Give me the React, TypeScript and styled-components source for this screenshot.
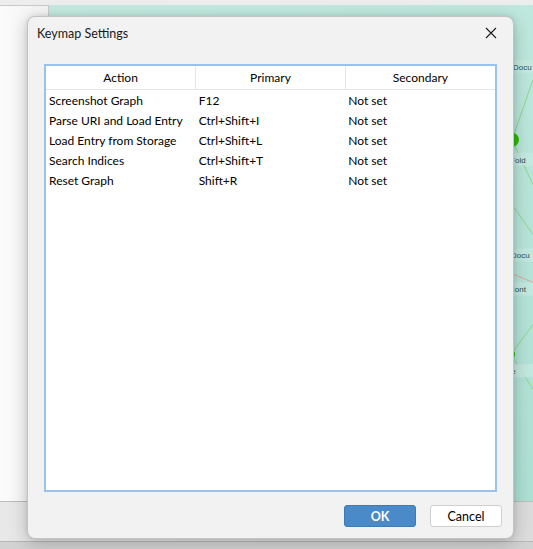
import React from "react";
import styled, { createGlobalStyle } from "styled-components";

interface Binding {
  action: string;
  primary: string;
  secondary: string;
}

const bindings: Binding[] = [
  { action: "Screenshot Graph", primary: "F12", secondary: "Not set" },
  { action: "Parse URI and Load Entry", primary: "Ctrl+Shift+I", secondary: "Not set" },
  { action: "Load Entry from Storage", primary: "Ctrl+Shift+L", secondary: "Not set" },
  { action: "Search Indices", primary: "Ctrl+Shift+T", secondary: "Not set" },
  { action: "Reset Graph", primary: "Shift+R", secondary: "Not set" },
];

const GlobalStyle = createGlobalStyle`
  html, body {
    margin: 0;
    padding: 0;
    width: 533px;
    height: 549px;
    overflow: hidden;
    font-family: Lato, "Noto Sans", sans-serif;
  }
`;

const App = () => {
  return (
    <>
      <GlobalStyle />
      <Desktop>
        <TopStrip />
        <Workspace>
          <Sidebar />
          <Canvas>
            <GraphDrawing />
          </Canvas>
        </Workspace>
        <StatusBar />
        <BottomEdge />

        <Dialog>
          <TitleBar>
            <Title>Keymap Settings</Title>
            <CloseButton aria-label="Close">
              <svg width="12" height="12" viewBox="0 0 12 12">
                <path d="M1 1 L11 11 M11 1 L1 11" stroke="#1a1a1a" strokeWidth="1.1" />
              </svg>
            </CloseButton>
          </TitleBar>
          <Body>
            <TableFrame>
              <Table>
                <thead>
                  <tr>
                    <HeadCell>Action</HeadCell>
                    <HeadCell>Primary</HeadCell>
                    <HeadCell $last>Secondary</HeadCell>
                  </tr>
                </thead>
                <tbody>
                  {bindings.map((b) => (
                    <tr key={b.action}>
                      <Cell>{b.action}</Cell>
                      <Cell>{b.primary}</Cell>
                      <Cell>{b.secondary}</Cell>
                    </tr>
                  ))}
                </tbody>
              </Table>
            </TableFrame>
          </Body>
          <Footer>
            <Button $primary>OK</Button>
            <Button>Cancel</Button>
          </Footer>
        </Dialog>
      </Desktop>
    </>
  );
};

// graph canvas peeking out on the right of the dialog
const GraphDrawing = () => (
  <svg width="100%" height="100%" viewBox="0 0 484 497" preserveAspectRatio="xMaxYMin meet">
    <g stroke="#8fd68a" strokeWidth="1" fill="none">
      <line x1="484" y1="75" x2="463" y2="135" />
      <line x1="463" y1="135" x2="484" y2="180" />
      <line x1="463" y1="200" x2="484" y2="230" />
      <line x1="484" y1="245" x2="455" y2="260" />
      <line x1="484" y1="320" x2="462" y2="350" />
      <line x1="462" y1="350" x2="484" y2="385" />
    </g>
    <g stroke="#e3a3a0" strokeWidth="1" fill="none">
      <line x1="460" y1="268" x2="484" y2="278" />
    </g>
    <g fill="#c6ebe2" opacity="0.8">
      <rect x="462" y="55" width="30" height="13" rx="3" />
      <rect x="458" y="148" width="30" height="13" rx="3" />
      <rect x="460" y="244" width="30" height="13" rx="3" />
      <rect x="459" y="278" width="30" height="13" rx="3" />
      <rect x="460" y="360" width="30" height="13" rx="3" />
    </g>
    <circle cx="463" cy="135" r="7" fill="#2fb80a" />
    <circle cx="461" cy="350" r="5" fill="#2fb80a" />
    <g fill="#35504a" fontSize="8" fontFamily="Liberation Sans, sans-serif">
      <text x="464" y="65">Docu</text>
      <text x="459" y="158">tFold</text>
      <text x="462" y="254">Docu</text>
      <text x="460" y="288">Cont</text>
      <text x="460" y="370">te</text>
    </g>
  </svg>
);

const Desktop = styled.div`
  position: relative;
  width: 533px;
  height: 549px;
  display: flex;
  flex-direction: column;
  background: #ececec;
`;

const TopStrip = styled.div`
  height: 5px;
  background: #ededed;
`;

const Workspace = styled.div`
  height: 496px;
  display: flex;
`;

const Sidebar = styled.div`
  width: 48px;
  background: linear-gradient(to right, #fbfbfb, #f3f3f3);
  border-top: 1px solid #c9c9c9;
  border-right: 1px solid #c9c9c9;
`;

const Canvas = styled.div`
  flex: 1;
  background: linear-gradient(160deg, #c4ebe1, #aee0d3);
  overflow: hidden;
`;

const StatusBar = styled.div`
  height: 39px;
  background: linear-gradient(to right, #e8e8e8, #dcdcdc);
  border-top: 1px solid #bdbdbd;
`;

const BottomEdge = styled.div`
  flex: 1;
  background: #d2d2d2;
  border-top: 1px solid #b8b8b8;
`;

const Dialog = styled.div`
  position: absolute;
  left: 27px;
  top: 16px;
  width: 487px;
  height: 523px;
  display: flex;
  flex-direction: column;
  background: #f2f2f2;
  border: 1px solid #c3c3c3;
  border-radius: 8px;
  box-shadow: 0 4px 18px rgba(0, 0, 0, 0.22), 0 0 4px rgba(0, 0, 0, 0.1);
  box-sizing: border-box;
`;

const TitleBar = styled.div`
  height: 32px;
  display: flex;
  align-items: center;
  justify-content: space-between;
  padding: 0 14px 0 9px;
`;

const Title = styled.div`
  font-size: 12.5px;
  color: #1a1a1a;
`;

const CloseButton = styled.div`
  width: 16px;
  height: 16px;
  display: flex;
  align-items: center;
  justify-content: center;
`;

const Body = styled.div`
  flex: 1;
  display: flex;
  padding: 15px 16px 0 16px;
`;

const TableFrame = styled.div`
  flex: 1;
  background: #ffffff;
  border: 2px solid #99c3ea;
  box-sizing: border-box;
  overflow: hidden;
`;

const Table = styled.table`
  width: 100%;
  border-collapse: collapse;
  table-layout: fixed;
  font-size: 12px;
  color: #000000;
`;

const HeadCell = styled.th<{ $last?: boolean }>`
  height: 23px;
  padding: 0;
  font-weight: normal;
  text-align: center;
  border-bottom: 1px solid #e5e5e5;
  border-right: ${(p) => (p.$last ? "none" : "1px solid #e5e5e5")};
`;

const Cell = styled.td`
  height: 20px;
  padding: 0 0 0 3px;
  white-space: nowrap;
  overflow: hidden;
`;

const Footer = styled.div`
  height: 46px;
  box-sizing: border-box;
  display: flex;
  justify-content: flex-end;
  align-items: flex-start;
  gap: 14px;
  padding: 13px 11px 0 0;
`;

const Button = styled.div<{ $primary?: boolean }>`
  width: 72px;
  height: 22px;
  box-sizing: border-box;
  display: flex;
  align-items: center;
  justify-content: center;
  font-size: 12.5px;
  border-radius: 3px;
  background: ${(p) => (p.$primary ? "#4a8ac9" : "#ffffff")};
  color: ${(p) => (p.$primary ? "#ffffff" : "#000000")};
  font-weight: ${(p) => (p.$primary ? 700 : 400)};
  border: 1px solid ${(p) => (p.$primary ? "#3f7ab5" : "#cfcfcf")};
`;

export default App;
